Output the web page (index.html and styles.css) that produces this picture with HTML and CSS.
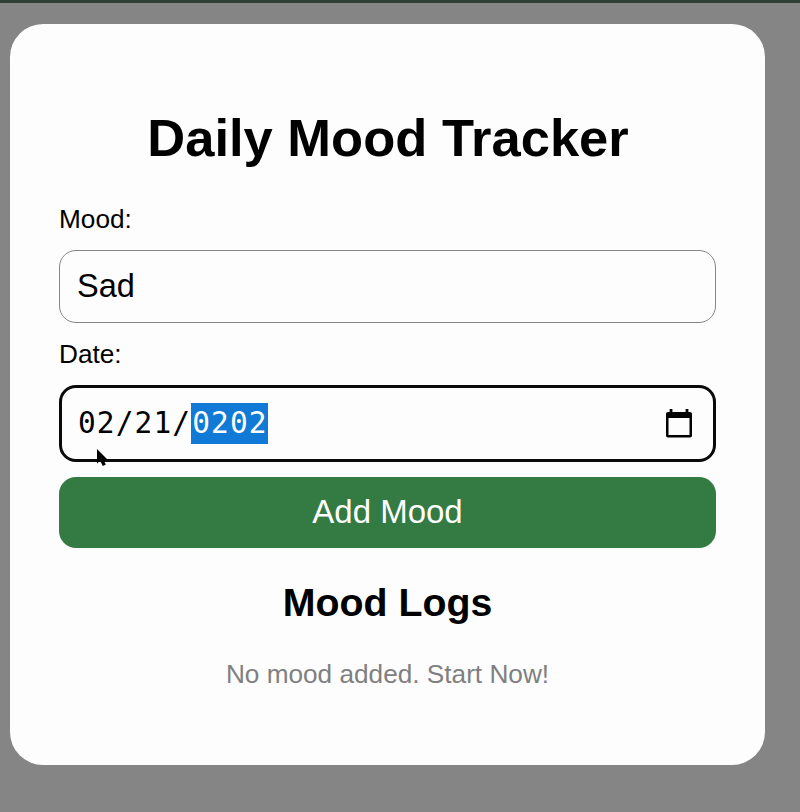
FILE: index.html
```html
<!DOCTYPE html>
<html lang="en">
<head>
<meta charset="utf-8">
<title>Daily Mood Tracker</title>
<link rel="stylesheet" href="styles.css">
</head>
<body>
<main class="card">
  <h1 class="title">Daily Mood Tracker</h1>
  <div class="label">Mood:</div>
  <div class="field">Sad</div>
  <div class="label label-date">Date:</div>
  <div class="field field-date">
    <span class="date">02/21/<span class="selected">0202</span></span>
    <svg class="calendar" viewBox="0 0 26 29" width="26" height="29"><path d="M3.600 0h2.800v3h13.200V0h2.800v3h1.600Q26 3 26 5v21.500Q26 28.500 24 28.500h-22Q0 28.500 0 26.500V5Q0 3 2 3h1.600zM2.500 9v17h21V9z" fill="#000" fill-rule="evenodd"/></svg>
    <svg class="cursor" viewBox="0 0 11 18" width="11" height="18"><path d="M0 0v14.500l3.200-2.800 2.600 5.300 3-1.400-2.300-4.600H11z" fill="#000"/></svg>
  </div>
  <button class="add">Add Mood</button>
  <h2 class="logs">Mood Logs</h2>
  <p class="empty">No mood added. Start Now!</p>
</main>
</body>
</html>
```
FILE: styles.css
```css
* { box-sizing: border-box; }
body {
  margin: 0;
  height: 812px;
  padding: 21px 35px 0 10px;
  border-top: 3px solid #2f4038;
  background: #868585;
  font-family: "Liberation Sans", Arial, sans-serif;
  font-size: 26.2px;
  color: #000;
  overflow: hidden;
}
.card {
  display: flex;
  flex-direction: column;
  height: 741px;
  padding: 84px 49px 0;
  border-radius: 33px;
  background: #fdfdfd;
}
.title {
  margin: 0;
  font-size: 52.5px;
  line-height: 60px;
  text-align: center;
  text-indent: 1px;
  white-space: nowrap;
}
.label { height: 30px; margin: 36px 0 16px; line-height: 30px; }
.label-date { margin-top: 16px; }
.field {
  display: flex;
  align-items: center;
  height: 73px;
  padding: 0 17px 1px;
  border: 1px solid #858585;
  border-radius: 17px;
  font-size: 32.5px;
}
.field-date {
  position: relative;
  justify-content: space-between;
  height: 77px;
  padding: 0 21px 0 16px;
  border: 3px solid #0a0a0a;
}
.calendar { margin-bottom: 1px; }
.date {
  display: flex;
  font-family: "DejaVu Sans Mono", monospace;
  font-size: 29.5px;
  line-height: 41px;
  letter-spacing: 1.1px;
}
.selected { padding-left: 1px; margin-right: -1px; background: #107ad6; color: #fff; }
.cursor { position: absolute; left: 35px; top: 61px; }
.add {
  height: 71px;
  margin: 15px 0 0;
  padding: 0 0 1px;
  border: 0;
  border-radius: 17px;
  background: #347a43;
  color: #fff;
  font-family: inherit;
  font-size: 33px;
}
.logs { margin: 32px 0 0; font-size: 39.3px; line-height: 44px; text-align: center; }
.empty { margin: 35px 0 0; line-height: 30px; text-align: center; color: #808080; }
```
